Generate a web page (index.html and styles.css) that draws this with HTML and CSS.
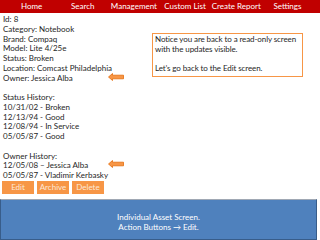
FILE: index.html
```html
<!DOCTYPE html>
<html>
<head>
<meta charset="utf-8">
<link rel="stylesheet" href="styles.css">
</head>
<body>
<nav class="nav">
  <span>Home</span><span>Search</span><span>Management</span><span>Custom List</span><span>Create Report</span><span>Settings</span>
</nav>
<main class="content">
  <div class="lines">
    <p>Id: 8</p>
    <p>Category: Notebook</p>
    <p>Brand: Compaq</p>
    <p>Model: Lite 4/25e</p>
    <p>Status: Broken</p>
    <p>Location: Comcast Philadelphia</p>
    <p>Owner: Jessica Alba</p>
    <p>&nbsp;</p>
    <p>Status History:</p>
    <p>10/31/02 - Broken</p>
    <p>12/13/94 - Good</p>
    <p>12/08/94 - In Service</p>
    <p>05/05/87 - Good</p>
    <p>&nbsp;</p>
    <p>Owner History:</p>
    <p>12/05/08 – Jessica Alba</p>
    <p>05/05/87 - Vladimir Kerbasky</p>
  </div>
  <div class="actions">
    <span class="btn">Edit</span><span class="btn">Archive</span><span class="btn">Delete</span>
  </div>
  <div class="callout">
    <p>Notice you are back to a read-only screen</p>
    <p>with the updates visible.</p>
    <p class="gap">Let’s go back to the Edit screen.</p>
  </div>
  <svg class="arrow arrow-1" width="16" height="8" viewBox="0 0 16 8"><polygon points="0.5,4 4.5,0.5 4.5,2.2 15.5,2.2 15.5,5.8 4.5,5.8 4.5,7.5" fill="#f79646" stroke="#e46c0a" stroke-width="0.8"/></svg>
  <svg class="arrow arrow-2" width="16" height="8" viewBox="0 0 16 8"><polygon points="0.5,4 4.5,0.5 4.5,2.2 15.5,2.2 15.5,5.8 4.5,5.8 4.5,7.5" fill="#f79646" stroke="#e46c0a" stroke-width="0.8"/></svg>
</main>
<footer class="note">
  <p>Individual Asset Screen.</p>
  <p>Action Buttons → Edit.</p>
</footer>
</body>
</html>
```

FILE: styles.css
```css
html, body {
  margin: 0;
  padding: 0;
  width: 320px;
  height: 240px;
  overflow: hidden;
  background: #ffffff;
  font-family: Lato, "Open Sans", sans-serif;
  font-size: 8px;
  color: #262626;
}
p { margin: 0; }
.nav {
  display: grid;
  grid-template-columns: repeat(6, 1fr);
  height: 13px;
  padding: 0 7px 0 6px;
  background: #c00000;
  color: #ffffff;
  align-items: center;
  text-align: center;
  line-height: 13px;
}
.content {
  position: relative;
  height: 186px;
}
.lines {
  padding: 2px 0 0 3px;
  line-height: 9.75px;
}
.actions {
  display: flex;
  gap: 3px;
  padding: 0 0 0 2px;
}
.btn {
  width: 32px;
  height: 13px;
  line-height: 13px;
  text-align: center;
  background: #f79646;
  color: #fde9d9;
}
.callout {
  position: absolute;
  left: 152px;
  top: 20px;
  width: 145px;
  height: 40px;
  padding: 1px 2px;
  border: 1px solid #f79646;
  line-height: 9.5px;
  white-space: nowrap;
  letter-spacing: -0.1px;
}
.callout .gap { margin-top: 9.5px; }
.arrow { position: absolute; }
.arrow-1 { left: 108px; top: 60px; }
.arrow-2 { left: 108px; top: 147px; }
.note {
  width: 317px;
  height: 41px;
  background: #4f81bd;
  border: 1px solid #385d8a;
  border-top: 1px solid #a0a8b4;
  color: #ffffff;
  text-align: center;
  line-height: 10px;
  padding-top: 12px;
  box-sizing: border-box;
}
```
